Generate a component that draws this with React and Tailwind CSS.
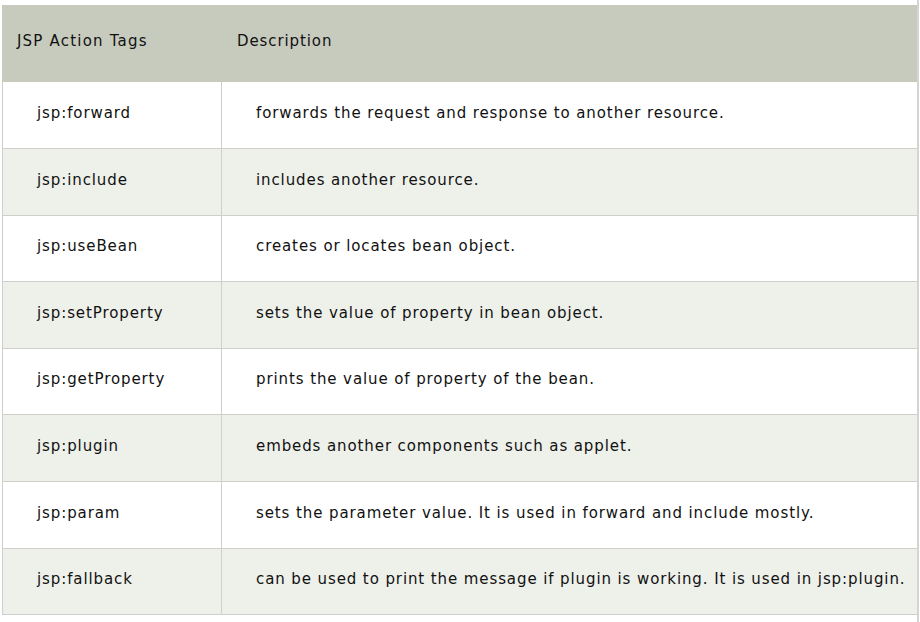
import React from "react";

const rows = [
  { tag: "jsp:forward", desc: "forwards the request and response to another resource.", h: "h-[67px]", bg: "bg-white" },
  { tag: "jsp:include", desc: "includes another resource.", h: "h-[67px]", bg: "bg-[#eef0ea]" },
  { tag: "jsp:useBean", desc: "creates or locates bean object.", h: "h-[66px]", bg: "bg-white" },
  { tag: "jsp:setProperty", desc: "sets the value of property in bean object.", h: "h-[67px]", bg: "bg-[#eef0ea]" },
  { tag: "jsp:getProperty", desc: "prints the value of property of the bean.", h: "h-[66px]", bg: "bg-white" },
  { tag: "jsp:plugin", desc: "embeds another components such as applet.", h: "h-[67px]", bg: "bg-[#eef0ea]" },
  { tag: "jsp:param", desc: "sets the parameter value. It is used in forward and include mostly.", h: "h-[67px]", bg: "bg-white" },
  { tag: "jsp:fallback", desc: "can be used to print the message if plugin is working. It is used in jsp:plugin.", h: "h-[66px]", bg: "bg-[#eef0ea]" },
];

export default function App() {
  return (
    <div className="w-[920px] h-[622px] bg-white flex overflow-hidden" style={{ fontFamily: '"DejaVu Sans", Verdana, sans-serif' }}>
      <div className="w-[917px] pt-[5px] pl-[2px]">
        <div className="w-[915px] text-[15px] tracking-[0.9px] text-[#111]">
          <div className="h-[77px] bg-[#c7cbbd] flex items-center pb-[4px]">
            <div className="w-[220px] pl-[15px] tracking-[1.2px]">JSP Action Tags</div>
            <div className="pl-[15px]">Description</div>
          </div>
          {rows.map((r) => (
            <div key={r.tag} className={`${r.h} ${r.bg} flex border-l border-b border-[#cfd0cb]`}>
              <div className="w-[219px] border-r border-[#cfd0cb] flex items-center pl-[34px] pb-[4px]">{r.tag}</div>
              <div className="flex-1 flex items-center pl-[34px] pb-[4px] whitespace-nowrap">{r.desc}</div>
            </div>
          ))}
        </div>
      </div>
      <div className="w-[2px] h-full bg-[#d4d4d4]" />
      <div className="w-[1px] h-full bg-white" />
    </div>
  );
}
